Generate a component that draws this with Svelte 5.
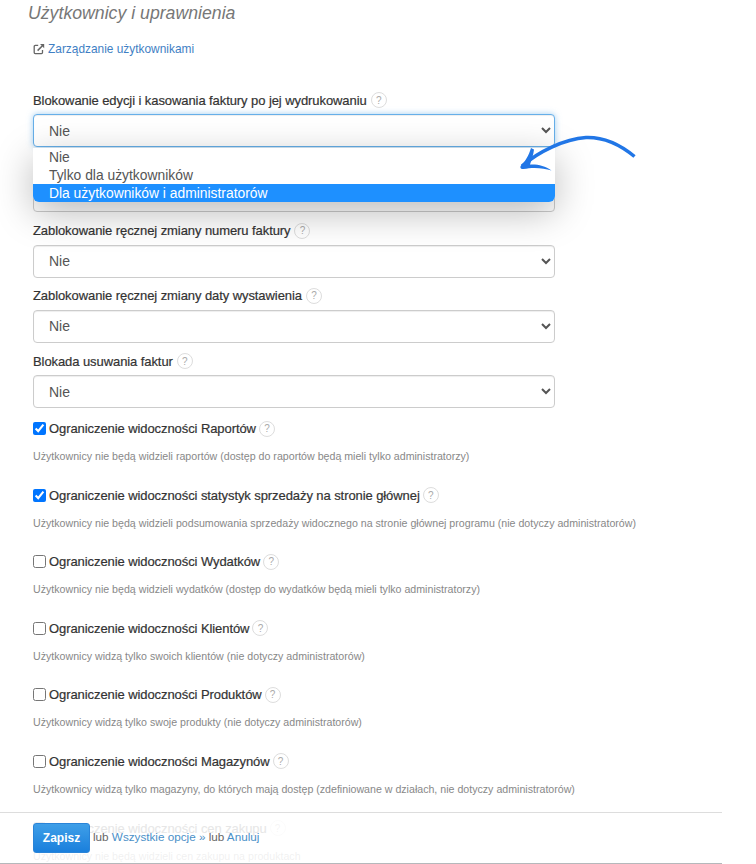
<script>
	const selectsAfter = [
		'Zablokowanie ręcznej zmiany numeru faktury',
		'Zablokowanie ręcznej zmiany daty wystawienia',
		'Blokada usuwania faktur',
	];

	const checks = [
		{
			label: 'Ograniczenie widoczności Raportów',
			hint: 'Użytkownicy nie będą widzieli raportów (dostęp do raportów będą mieli tylko administratorzy)',
			on: true,
		},
		{
			label: 'Ograniczenie widoczności statystyk sprzedaży na stronie głównej',
			hint: 'Użytkownicy nie będą widzieli podsumowania sprzedaży widocznego na stronie głównej programu (nie dotyczy administratorów)',
			on: true,
		},
		{
			label: 'Ograniczenie widoczności Wydatków',
			hint: 'Użytkownicy nie będą widzieli wydatków (dostęp do wydatków będą mieli tylko administratorzy)',
			on: false,
		},
		{
			label: 'Ograniczenie widoczności Klientów',
			hint: 'Użytkownicy widzą tylko swoich klientów (nie dotyczy administratorów)',
			on: false,
		},
		{
			label: 'Ograniczenie widoczności Produktów',
			hint: 'Użytkownicy widzą tylko swoje produkty (nie dotyczy administratorów)',
			on: false,
		},
		{
			label: 'Ograniczenie widoczności Magazynów',
			hint: 'Użytkownicy widzą tylko magazyny, do których mają dostęp (zdefiniowane w działach, nie dotyczy administratorów)',
			on: false,
		},
		{
			label: 'Ograniczenie widoczności cen zakupu',
			hint: 'Użytkownicy nie będą widzieli cen zakupu na produktach',
			on: false,
		},
	];

	const options = ['Nie', 'Tylko dla użytkowników', 'Dla użytkowników i administratorów'];
</script>

<div class="page">
	<h2 class="title">Użytkownicy i uprawnienia</h2>

	<a class="manage" href="#users">
		<svg class="ext" viewBox="0 0 12 12" width="12" height="12" aria-hidden="true">
			<path d="M9.500 7v2.600a1 1 0 0 1-1 1H2.200a1 1 0 0 1-1-1V3.400a1 1 0 0 1 1-1h3" fill="none" stroke="#666" stroke-width="1.3" />
			<path d="M4.600 7.600 9.400 2.800" fill="none" stroke="#666" stroke-width="1.5" />
			<path d="M7 1h4.200v4.200z" fill="#666" />
		</svg>
		Zarządzanie użytkownikami
	</a>

	<div class="first group">
		<div class="label">Blokowanie edycji i kasowania faktury po jej wydrukowaniu <span class="help">?</span></div>
		<select class="focused"><option>Nie</option></select>
		<div class="dropdown">
			{#each options as option, i}
				<div class="option" class:active={i === 2}>{option}</div>
			{/each}
		</div>
	</div>

	<div class="group">
		<div class="label">Blokowanie edycji faktury <span class="help">?</span></div>
		<select><option>Nie</option></select>
	</div>

	{#each selectsAfter as label}
		<div class="group">
			<div class="label">{label} <span class="help">?</span></div>
			<select><option>Nie</option></select>
		</div>
	{/each}

	<div class="checks">
		{#each checks as check}
			<div class="check">
				<label class="check-label">
					<input type="checkbox" checked={check.on} />
					<span>{check.label}</span>
					<span class="help">?</span>
				</label>
				<p class="hint">{check.hint}</p>
			</div>
		{/each}
	</div>

	<svg class="arrow" viewBox="0 0 130 44" width="130" height="44" aria-hidden="true">
		<path d="M124.500 24.500C107 10 91 5 76 5.500C54 7 28 20 12 34" fill="none" stroke="#2176e6" stroke-width="3.500" />
		<path d="M21 16C19 23 15 30 11 33.500C9.500 35.500 11 37.500 13.500 37C22 35.200 33 35.500 41.500 38.500C35 33.500 27 32 20 32.500C22 27 23.500 22 24 17.500z" fill="#2176e6" />
	</svg>

	<div class="footer">
		<button type="button" class="save">Zapisz</button>
		<span class="actions">lub <a href="#all">Wszystkie opcje »</a> lub <a href="#cancel">Anuluj</a></span>
	</div>
</div>

<style>
	:global(body) {
		background: #fff;
		overflow: hidden;
	}

	.page {
		position: relative;
		height: 864px;
		overflow: hidden;
		padding: 0 33px;
		box-sizing: border-box;
		font-family: 'Liberation Sans', Arial, sans-serif;
		color: #333;
	}

	.title {
		margin: 2px 0 0 -5px;
		font-size: 17.700px;
		line-height: 22px;
		font-weight: 400;
		font-style: italic;
		color: #777;
	}

	.manage {
		display: flex;
		align-items: center;
		gap: 3px;
		margin-top: 15px;
		font-size: 11.900px;
		line-height: 20px;
		color: #3f7fc4;
		text-decoration: none;
	}

	.group {
		position: relative;
		width: 522px;
		margin-bottom: 9.250px;
	}

	.first {
		margin-top: 32px;
	}

	.label {
		display: flex;
		align-items: center;
		gap: 4px;
		height: 18px;
		margin-bottom: 5px;
		font-size: 13px;
		letter-spacing: -0.08px;
		color: #333;
		-webkit-text-stroke: 0.2px #333;
	}

	.help {
		display: inline-flex;
		align-items: center;
		justify-content: center;
		box-sizing: border-box;
		width: 16px;
		height: 16px;
		border: 1px solid #ddd;
		border-radius: 50%;
		font-size: 10px;
		font-weight: 400;
		color: #aaa;
		background: #fff;
		-webkit-text-stroke: 0;
	}

	select {
		display: block;
		width: 100%;
		height: 33px;
		padding: 0 11px;
		box-sizing: border-box;
		border: 1px solid #ccc;
		border-radius: 4px;
		background: #fff;
		font-family: inherit;
		font-size: 14px;
		color: #555;
		box-shadow: inset 0 1px 1px rgba(0, 0, 0, 0.07);
	}

	.focused {
		border-color: #66afe9;
		box-shadow: inset 0 1px 1px rgba(0, 0, 0, 0.07), 0 0 6px rgba(102, 175, 233, 0.6);
	}

	.dropdown {
		position: absolute;
		z-index: 2;
		left: 0;
		right: 0;
		top: 57px;
		overflow: hidden;
		border-radius: 0 0 6px 6px;
		background: #fff;
		box-shadow: 0 10px 38px rgba(0, 0, 0, 0.28);
		font-size: 13.850px;
		line-height: 18px;
		color: #555;
	}

	.option {
		height: 18px;
		padding-left: 16px;
	}

	.option.active {
		background: #1e90ff;
		color: #fff;
	}

	.checks {
		display: flex;
		flex-direction: column;
		margin-top: 10.500px;
	}

	.check {
		height: 66.600px;
	}

	.check-label {
		display: flex;
		align-items: center;
		height: 20px;
		font-size: 13px;
		letter-spacing: -0.08px;
		color: #333;
		-webkit-text-stroke: 0.2px #333;
	}

	.check-label input {
		width: 13px;
		height: 13px;
		margin: 0 3px 0 0;
	}

	.check-label .help {
		margin-left: 3px;
	}

	.hint {
		margin: 10.500px 0 0;
		font-size: 10.630px;
		line-height: 14px;
		color: #888;
	}

	.arrow {
		position: absolute;
		left: 510px;
		top: 132px;
		z-index: 3;
	}

	.footer {
		position: absolute;
		z-index: 4;
		left: 0;
		bottom: 0;
		width: 722px;
		height: 52px;
		box-sizing: border-box;
		display: flex;
		align-items: center;
		gap: 3px;
		padding: 0 0 1px 33px;
		border-top: 1px solid #ddd;
		border-bottom: 1px solid #b5b8bb;
		background: rgba(255, 255, 255, 0.88);
		font-size: 11.700px;
		color: #666;
	}

	.save {
		width: 57px;
		height: 30px;
		padding: 0;
		border: 1px solid #2a84d8;
		border-radius: 3px;
		background: linear-gradient(#3f9fe8, #1a7fdc);
		color: #fff;
		font-family: inherit;
		font-size: 12px;
		font-weight: 700;
	}

	.actions {
		margin-bottom: 2px;
	}

	.actions a {
		color: #4a90c8;
		text-decoration: none;
	}
</style>
